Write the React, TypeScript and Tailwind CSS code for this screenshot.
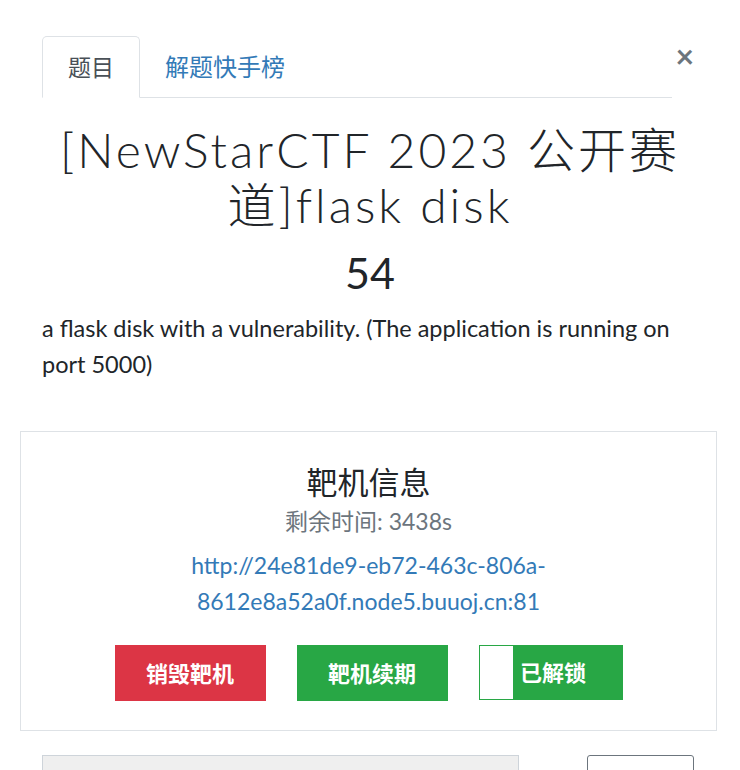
import React from 'react'

const sans = { fontFamily: '"Lato", "Noto Sans CJK SC", sans-serif' }

export default function App() {
  return (
    <div className="w-[740px] h-[770px] overflow-hidden bg-white text-[#212529]" style={sans}>
      <div className="relative pt-[36px] px-[42px]">
        {/* Tabs */}
        <div className="flex w-[630px] border-b border-[#dee2e6]">
          <div className="h-[62px] w-[98px] -mb-px flex items-center justify-center border border-[#dee2e6] border-b-white rounded-t-[5px] bg-white text-[23px] text-[#495057]">
            题目
          </div>
          <div className="h-[61px] px-[25px] flex items-center text-[24px] text-[#337ab7]">
            解题快手榜
          </div>
        </div>
        <button className="absolute right-[46px] top-[40px] text-[32px] leading-none font-bold text-[#6c757d]">
          ×
        </button>

        {/* Title */}
        <h1 className="mt-[24px] -mx-[24px] text-center text-[48px] leading-[55px] font-light tracking-[3px] text-[#212529]">
          [NewStarCTF 2023 公开赛道]flask disk
        </h1>
        <div className="mt-[17px] text-center text-[43px] leading-[48px] text-[#212529]">54</div>
        <p className="mt-[13px] text-[23.5px] leading-[36px] text-[#212529]">
          a flask disk with a vulnerability. (The application is running on port 5000)
        </p>
      </div>

      {/* Target box */}
      <div className="mx-[20px] mt-[49px] w-[697px] h-[300px] border border-[#dee2e6] flex flex-col items-center pt-[29px]">
        <div className="text-[31px] leading-[42px] text-[#212529]">靶机信息</div>
        <div className="mt-[2px] text-[23px] leading-[32px] text-[#6c757d]">剩余时间: 3438s</div>
        <a className="mt-[10px] w-[420px] text-center text-[23px] leading-[36px] text-[#337ab7]">
          http://24e81de9-eb72-463c-806a-8612e8a52a0f.node5.buuoj.cn:81
        </a>
        <div className="mt-[26px] flex gap-[31px]">
          <button className="w-[151px] h-[56px] bg-[#dc3545] text-white text-[22px] font-bold">销毁靶机</button>
          <button className="w-[151px] h-[56px] bg-[#28a745] text-white text-[22px] font-bold">靶机续期</button>
          <button className="w-[144px] h-[55px] flex border border-[#28a745] bg-[#28a745] text-white text-[22px] font-bold">
            <span className="w-[33px] h-full bg-white"></span>
            <span className="flex-1 flex items-center justify-center pr-[28px]">已解锁</span>
          </button>
        </div>
      </div>

      {/* Flag input row */}
      <div className="mt-[24px] px-[42px] flex items-start">
        <div className="w-[477px] h-[40px] bg-[#efefef] border border-[#ced4da]"></div>
        <div className="ml-[68px] w-[107px] h-[40px] border border-[#6c757d] rounded-t-[3px]"></div>
      </div>
    </div>
  )
}
